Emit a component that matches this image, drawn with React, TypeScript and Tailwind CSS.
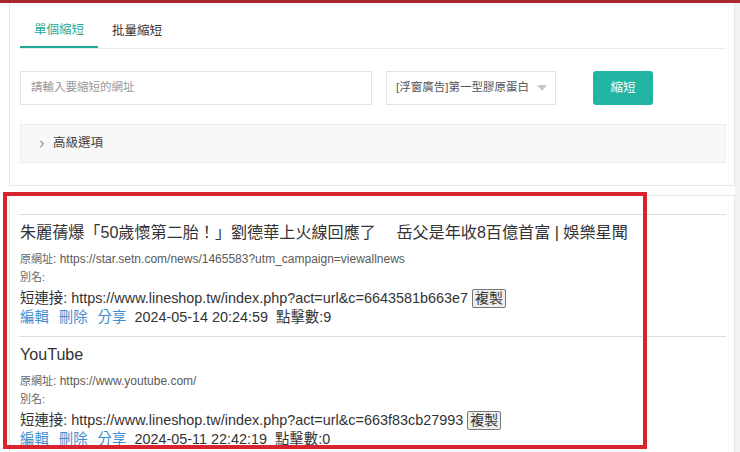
import React from "react";
import { ChevronRight } from "lucide-react";

type Item = {
  title: string;
  url: string;
  short: string;
  date: string;
  clicks: string;
};

const items: Item[] = [
  {
    title: "朱麗蒨爆「50歲懷第二胎！」劉德華上火線回應了　 岳父是年收8百億首富 | 娛樂星聞",
    url: "https://star.setn.com/news/1465583?utm_campaign=viewallnews",
    short: "https://www.lineshop.tw/index.php?act=url&c=6643581b663e7",
    date: "2024-05-14 20:24:59",
    clicks: "9",
  },
  {
    title: "YouTube",
    url: "https://www.youtube.com/",
    short: "https://www.lineshop.tw/index.php?act=url&c=663f83cb27993",
    date: "2024-05-11 22:42:19",
    clicks: "0",
  },
];

function Row({ it }: { it: Item }) {
  return (
    <div className="border-t border-[#dedede] pt-[5px] pb-[11px] pl-[1px]">
      <div className="text-[16.1px] leading-[24px] text-[#333] whitespace-nowrap">{it.title}</div>
      <div className="mt-[6px] leading-[18px] text-[12px] text-[#5a5a5a] whitespace-nowrap">
        <span className="text-[11px] text-[#666]">原網址</span>: {it.url}
      </div>
      <div className="leading-[18px] text-[11px] text-[#666]">別名:</div>
      <div className="mt-[1px] leading-[22px] text-[14.4px] text-[#333] whitespace-nowrap flex items-center">
        <span>短連接: {it.short}</span>
        <span className="ml-[4px] inline-flex items-center h-[19px] px-[2px] border border-[#777] rounded-[2px] bg-[#efefef] text-[14px] leading-[17px] text-[#333]">
          複製
        </span>
      </div>
      <div className="leading-[16px] text-[14.4px] flex items-center gap-[10px] whitespace-nowrap">
        <span className="text-[#3d8fcf]">編輯</span>
        <span className="text-[#3d8fcf]">刪除</span>
        <span className="text-[#3d8fcf] mr-[-2px]">分享</span>
        <span className="text-[#333]">{it.date}</span>
        <span className="text-[#333] ml-[-2px]">點擊數:{it.clicks}</span>
      </div>
    </div>
  );
}

export default function App() {
  return (
    <div className="relative w-[740px] h-[452px] overflow-hidden bg-white font-['Liberation_Sans','Noto_Sans_CJK_TC',sans-serif]">
      <div className="h-[3px] bg-[#a8262e]" />
      <div className="flex">
        <div className="w-[735px] pl-[9px]">
          {/* Panel 1 */}
          <div className="border border-t-0 border-[#e6e6e6] pl-[10px] pr-[8px] pb-[22px]">
            <div className="pt-[9px] flex border-b border-[#ececec]">
              <div className="w-[78px] h-[36px] -mb-px border-b-2 border-[#1fa997] flex items-center justify-center text-[12.5px] text-[#1fa997] font-['Noto_Sans_CJK_TC',sans-serif]">
                單個縮短
              </div>
              <div className="w-[78px] h-[36px] flex items-center justify-center text-[12.5px] text-[#333] font-['Noto_Sans_CJK_TC',sans-serif]">
                批量縮短
              </div>
            </div>
            <div className="mt-[22px] flex items-center">
              <div className="w-[352px] h-[34px] border border-[#e2e2e2] flex items-center pl-[10px] text-[11.5px] text-[#999]">
                請輸入要縮短的網址
              </div>
              <div className="ml-[14px] w-[170px] h-[34px] border border-[#e2e2e2] flex items-center pl-[9px] pr-[8px] text-[11.5px] text-[#555] whitespace-nowrap overflow-hidden">
                <span className="flex-1 overflow-hidden">[浮窗廣告]第一型膠原蛋白</span>
                <span className="ml-[4px] w-0 h-0 border-l-[5px] border-r-[5px] border-t-[6px] border-l-transparent border-r-transparent border-t-[#c8c8c8]" />
              </div>
              <div className="ml-[37px] w-[60px] h-[34px] rounded-[3px] bg-[#22b5a3] flex items-center justify-center text-[12.5px] text-white">
                縮短
              </div>
            </div>
            <div className="mt-[19px] h-[39px] border border-[#ececec] bg-[#f8f8f8] flex items-center pl-[15px] text-[12.5px] text-[#444]">
              <ChevronRight size={12} strokeWidth={1.8} className="text-[#444]" />
              <span className="ml-[5px]">高級選項</span>
            </div>
          </div>
          {/* Panel 2 */}
          <div className="mt-[9px] border border-[#e6e6e6] pl-[9px] pr-[8px] pt-[18px] h-[400px]">
            {items.map((it, i) => (
              <Row key={i} it={it} />
            ))}
          </div>
        </div>
        <div className="flex-1 bg-[#f3f3f3]" />
      </div>
      <div className="absolute left-[3px] top-[192px] w-[644px] h-[257px] border-[4px] border-[#d9232d]" />
    </div>
  );
}
